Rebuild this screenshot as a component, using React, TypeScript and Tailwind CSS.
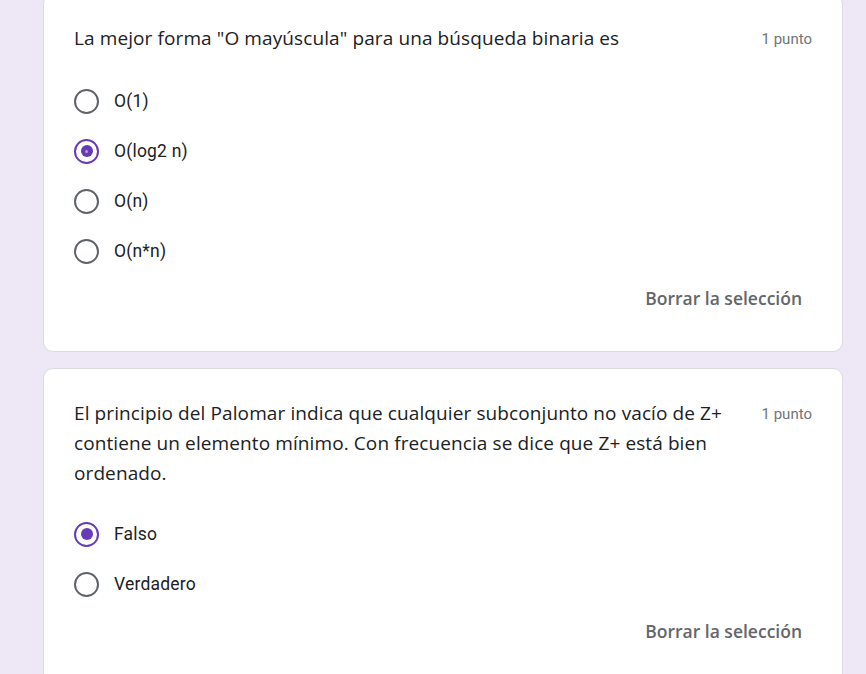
import React from "react";

const titleFont = { fontFamily: '"Open Sans", "Noto Sans", sans-serif' };

function Radio({ checked, focus }: { checked?: boolean; focus?: boolean }) {
  if (checked) {
    return (
      <div className="w-[25px] h-[25px] rounded-full border-[2.5px] border-[#673ab7] flex items-center justify-center shrink-0">
        <div className="w-[12px] h-[12px] rounded-full bg-[#673ab7] flex items-center justify-center">
          {focus && <div className="w-[3px] h-[3px] rounded-full bg-[#b39ddb]" />}
        </div>
      </div>
    );
  }
  return <div className="w-[25px] h-[25px] rounded-full border-[2.5px] border-[#5f6368] shrink-0" />;
}

function Question({
  title,
  options,
  selected,
  focus,
  titleShift,
}: {
  title: string;
  options: string[];
  selected: number;
  focus?: boolean;
  titleShift?: boolean;
}) {
  return (
    <div className="bg-white border border-[#dadce0] rounded-[10px] px-[30px] pt-[30px] pb-[30px]">
      <div className={titleShift ? "flex items-start -mt-[2px] pb-[2px]" : "flex items-start -mt-[1px] pb-[1px]"}>
        <div
          className="flex-1 text-[19px] leading-[30px] text-[#202124] tracking-[0.1px]"
          style={titleFont}
        >
          {title}
        </div>
        <div className="ml-[30px] pt-[1px] text-[15px] leading-[30px] text-[#70757a] font-['Roboto',sans-serif] whitespace-nowrap">
          1 punto
        </div>
      </div>
      <div className="mt-[20px] flex flex-col">
        {options.map((o, i) => (
          <div key={o} className="h-[50px] flex items-center gap-[15px]">
            <Radio checked={i === selected} focus={focus} />
            <span className="text-[17.5px] text-[#202124] font-['Roboto',sans-serif] tracking-[0.2px]">{o}</span>
          </div>
        ))}
      </div>
      <div className="flex justify-end">
        <div
          className="h-[45px] px-[10px] flex items-center text-[17.5px] font-semibold text-[#63666a]"
          style={titleFont}
        >
          Borrar la selección
        </div>
      </div>
    </div>
  );
}

export default function App() {
  return (
    <div className="h-[674px] overflow-hidden bg-[#ede7f6]">
      <div className="ml-[43px] w-[800px] -mt-[6px] flex flex-col gap-[16px]">
        <Question
          title={'La mejor forma "O mayúscula" para una búsqueda binaria es'}
          options={["O(1)", "O(log2 n)", "O(n)", "O(n*n)"]}
          selected={1}
          focus
          titleShift
        />
        <Question
          title="El principio del Palomar indica que cualquier subconjunto no vacío de Z+ contiene un elemento mínimo. Con frecuencia se dice que Z+ está bien ordenado."
          options={["Falso", "Verdadero"]}
          selected={0}
        />
      </div>
    </div>
  );
}
